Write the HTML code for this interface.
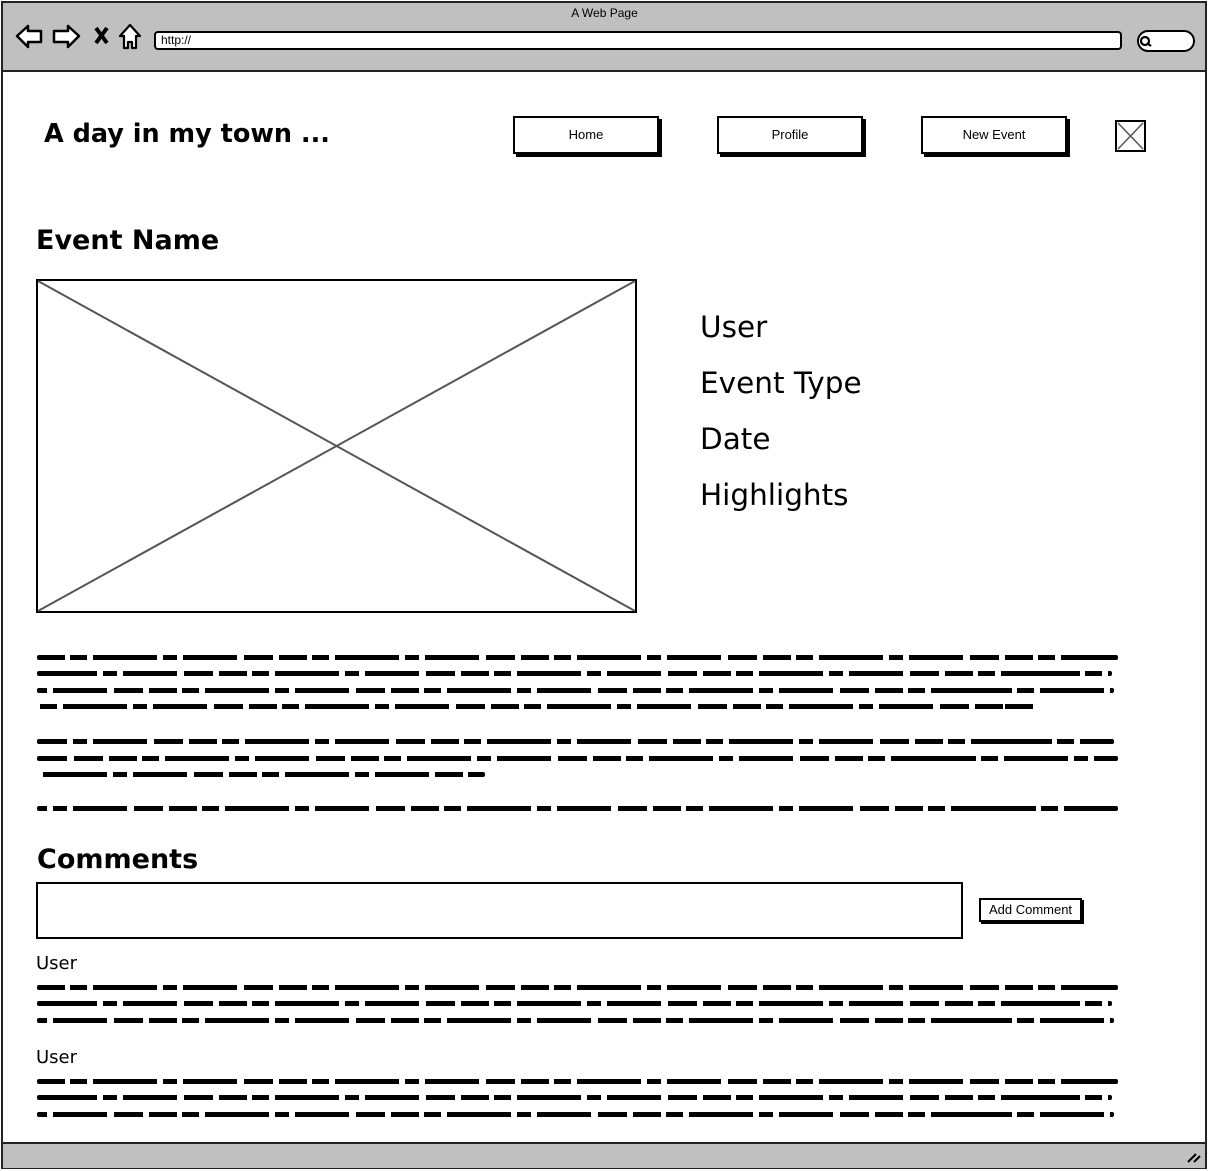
<!DOCTYPE html>
<html><head><meta charset="utf-8"><style>
*{margin:0;padding:0;box-sizing:border-box}
body{width:1209px;height:1171px;background:#fff;position:relative;overflow:hidden;font-family:"Liberation Sans",sans-serif;color:#000}
.a{position:absolute}
.sq{position:absolute;height:5px;border-radius:2px;
background:repeating-linear-gradient(90deg,#000 0 28px,transparent 28px 33px,#000 33px 50px,transparent 50px 56px,#000 56px 120px,transparent 120px 126px,#000 126px 140px,transparent 140px 146px,#000 146px 200px,transparent 200px 207px,#000 207px 236px,transparent 236px 242px)}
.btn{position:absolute;top:116px;width:146px;height:38px;border:2px solid #000;box-shadow:3px 3px 0 #000;background:#fff;font-size:13px;text-align:center;line-height:34px}
.h{font-family:"DejaVu Sans","Liberation Sans",sans-serif;font-weight:bold}
.m{font-size:29.5px;font-family:"DejaVu Sans",sans-serif;position:absolute;left:700px}
</style></head><body>
<div class="a" style="left:1px;top:1px;width:1206px;height:1168px;border:2px solid #222"></div>
<div class="a" style="left:3px;top:3px;width:1202px;height:69px;background:#c0c0c0;border-bottom:2px solid #222"></div>
<div class="a" style="left:0;top:6px;width:1209px;text-align:center;font-size:12px">A Web Page</div>
<svg class="a" style="left:14px;top:22px" width="135" height="30" viewBox="0 0 135 30">
<path d="M3 14 L14 4 V9 H27 V20 H14 V25 Z" fill="#fff" stroke="#000" stroke-width="2.5" stroke-linejoin="round"/>
<path d="M65 14 L54 4 V9 H40 V20 H54 V25 Z" fill="#fff" stroke="#000" stroke-width="2.5" stroke-linejoin="round"/>
<path d="M82 6 L93 21 M93 6 L82 21" stroke="#000" stroke-width="4"/>
<path d="M116 3 L106 14 H110 V26 H114 V20 H118 V26 H122 V14 H126 Z" fill="#fff" stroke="#000" stroke-width="2.2" stroke-linejoin="round"/>
</svg>
<div class="a" style="left:154px;top:31px;width:968px;height:19px;background:#fff;border:2px solid #000;border-radius:4px;font-size:12px;line-height:15px;padding-left:5px">http://</div>
<div class="a" style="left:1137px;top:30px;width:58px;height:22px;background:#fff;border:2px solid #000;border-radius:11px"></div>
<svg class="a" style="left:1139px;top:35px" width="16" height="14"><circle cx="6" cy="6" r="4" fill="none" stroke="#000" stroke-width="2.2"/><path d="M8 8 L12 11" stroke="#000" stroke-width="2.2"/></svg>
<div class="a" style="left:3px;top:1142px;width:1202px;height:26px;background:#c0c0c0;border-top:2px solid #222"></div>
<svg class="a" style="left:1186px;top:1150px" width="16" height="14"><path d="M2 12 L10 4 M8 12 L14 6" stroke="#000" stroke-width="2"/></svg>

<div class="a h" style="left:44px;top:119px;font-size:25.5px">A day in my town ...</div>
<div class="btn" style="left:513px">Home</div>
<div class="btn" style="left:717px">Profile</div>
<div class="btn" style="left:921px">New Event</div>
<svg class="a" style="left:1115px;top:120px" width="32" height="33"><rect x="1" y="1" width="29" height="30" fill="#fff" stroke="#000" stroke-width="2"/><path d="M3 3 L28 29 M28 3 L3 29" stroke="#555" stroke-width="1.5"/></svg>

<div class="a h" style="left:36px;top:225px;font-size:27px">Event Name</div>
<svg class="a" style="left:36px;top:279px" width="602" height="335"><rect x="1" y="1" width="599" height="332" fill="#fff" stroke="#000" stroke-width="2"/><path d="M2 2 L599 332 M599 2 L2 332" stroke="#555" stroke-width="2"/></svg>
<div class="m" style="top:310px">User</div>
<div class="m" style="top:366px">Event Type</div>
<div class="m" style="top:422px">Date</div>
<div class="m" style="top:478px">Highlights</div>

<div class="sq" style="left:37px;top:655px;width:1081px"></div>
<div class="sq" style="left:37px;top:671px;width:1075px;background-position:-60px 0"></div>
<div class="sq" style="left:37px;top:688px;width:1077px;background-position:-130px 0"></div>
<div class="sq" style="left:37px;top:704px;width:998px;background-position:-30px 0"></div>
<div class="sq" style="left:37px;top:739px;width:1077px;background-position:-90px 0"></div>
<div class="sq" style="left:37px;top:756px;width:1081px;background-position:-170px 0"></div>
<div class="sq" style="left:37px;top:772px;width:448px;background-position:-50px 0"></div>
<div class="sq" style="left:37px;top:806px;width:1081px;background-position:-110px 0"></div>

<div class="a h" style="left:37px;top:844px;font-size:27px">Comments</div>
<div class="a" style="left:36px;top:882px;width:927px;height:57px;border:2px solid #000;background:#fff"></div>
<div class="a" style="left:979px;top:898px;width:103px;height:24px;border:2px solid #000;box-shadow:2px 2px 0 #000;font-size:13px;text-align:center;line-height:19px">Add Comment</div>

<div class="a" style="left:36px;top:953px;font-size:18px;font-family:'DejaVu Sans',sans-serif">User</div>
<div class="sq" style="left:37px;top:985px;width:1081px"></div>
<div class="sq" style="left:37px;top:1001px;width:1075px;background-position:-60px 0"></div>
<div class="sq" style="left:37px;top:1018px;width:1077px;background-position:-130px 0"></div>
<div class="a" style="left:36px;top:1047px;font-size:18px;font-family:'DejaVu Sans',sans-serif">User</div>
<div class="sq" style="left:37px;top:1079px;width:1081px"></div>
<div class="sq" style="left:37px;top:1095px;width:1075px;background-position:-60px 0"></div>
<div class="sq" style="left:37px;top:1112px;width:1077px;background-position:-130px 0"></div>
</body></html>
